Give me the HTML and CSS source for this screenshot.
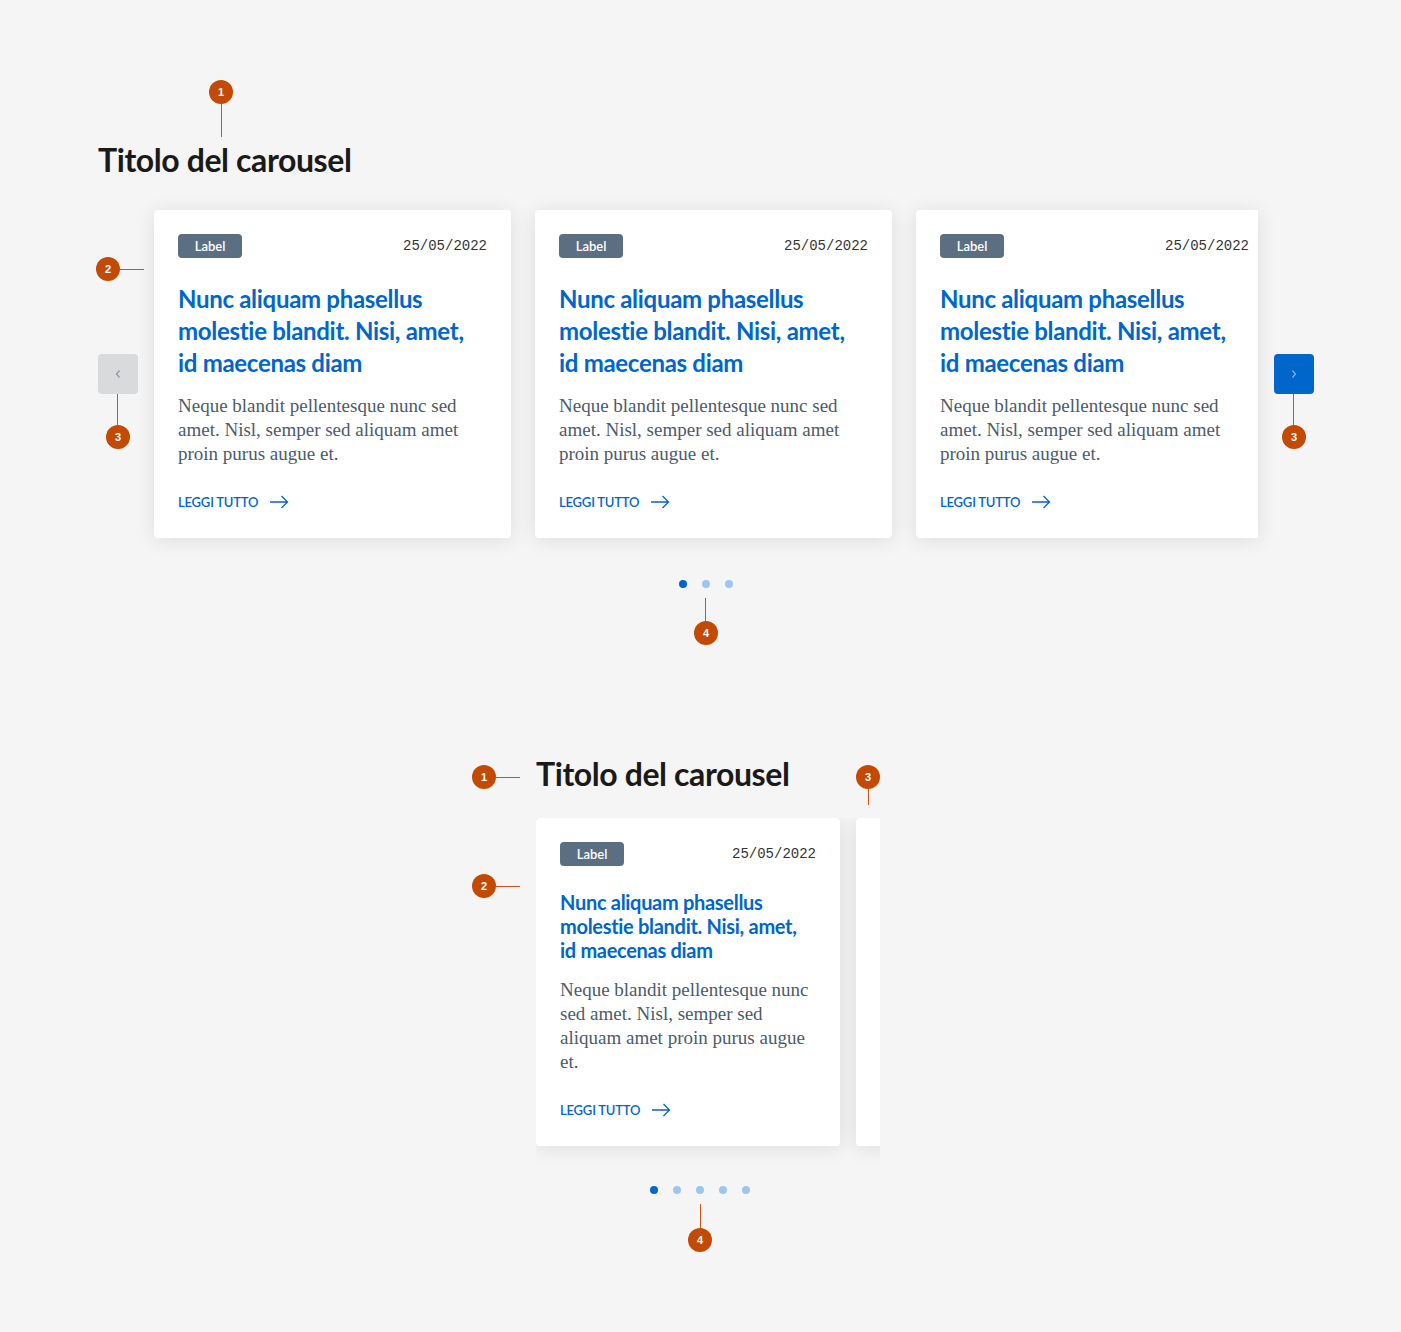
FILE: index.html
```html
<!DOCTYPE html>
<html lang="it">
<head>
<meta charset="utf-8">
<title>Carousel</title>
<link rel="stylesheet" href="styles.css">
</head>
<body>
<main class="page">

  <section class="desk">
    <h2 class="title">Titolo del carousel</h2>
    <div class="row">
      <button class="nav nav-prev" aria-label="Precedente">
        <svg width="8" height="10" viewBox="0 0 8 10"><polyline points="5.5,1.5 2.5,5 5.5,8.5" fill="none" stroke="#8e969e" stroke-width="1.2"/></svg>
      </button>
      <div class="track">
        <article class="card">
          <div class="card-inner">
            <div class="card-head"><span class="label">Label</span><span class="date">25/05/2022</span></div>
            <h3 class="card-title">Nunc aliquam phasellus molestie blandit. Nisi, amet, id maecenas diam</h3>
            <p class="card-text">Neque blandit pellentesque nunc sed amet. Nisl, semper sed aliquam amet proin purus augue et.</p>
            <a class="more" href="#">LEGGI TUTTO <svg width="20" height="14" viewBox="0 0 20 14"><path d="M1 7H18.5M12.5 1L18.5 7L12.5 13" fill="none" stroke="#0066cc" stroke-width="1.3"/></svg></a>
          </div>
        </article>
        <article class="card">
          <div class="card-inner">
            <div class="card-head"><span class="label">Label</span><span class="date">25/05/2022</span></div>
            <h3 class="card-title">Nunc aliquam phasellus molestie blandit. Nisi, amet, id maecenas diam</h3>
            <p class="card-text">Neque blandit pellentesque nunc sed amet. Nisl, semper sed aliquam amet proin purus augue et.</p>
            <a class="more" href="#">LEGGI TUTTO <svg width="20" height="14" viewBox="0 0 20 14"><path d="M1 7H18.5M12.5 1L18.5 7L12.5 13" fill="none" stroke="#0066cc" stroke-width="1.3"/></svg></a>
          </div>
        </article>
        <article class="card card-cut">
          <div class="card-inner">
            <div class="card-head"><span class="label">Label</span><span class="date">25/05/2022</span></div>
            <h3 class="card-title">Nunc aliquam phasellus molestie blandit. Nisi, amet, id maecenas diam</h3>
            <p class="card-text">Neque blandit pellentesque nunc sed amet. Nisl, semper sed aliquam amet proin purus augue et.</p>
            <a class="more" href="#">LEGGI TUTTO <svg width="20" height="14" viewBox="0 0 20 14"><path d="M1 7H18.5M12.5 1L18.5 7L12.5 13" fill="none" stroke="#0066cc" stroke-width="1.3"/></svg></a>
          </div>
        </article>
      </div>
      <button class="nav nav-next" aria-label="Successivo">
        <svg width="8" height="10" viewBox="0 0 8 10"><polyline points="2.5,1.5 5.5,5 2.5,8.5" fill="none" stroke="#7fb6f0" stroke-width="1.2"/></svg>
      </button>
    </div>
    <div class="dots dots-desk"><span class="dot active"></span><span class="dot"></span><span class="dot"></span></div>

    <span class="ann ann-v a-d1"><span class="pin">1</span></span>
    <span class="ann ann-h a-d2"><span class="pin">2</span></span>
    <span class="ann ann-v a-d3l"><span class="pin">3</span></span>
    <span class="ann ann-v a-d3r"><span class="pin">3</span></span>
    <span class="ann ann-v a-d4"><span class="pin">4</span></span>
  </section>

  <section class="mob">
    <h2 class="title">Titolo del carousel</h2>
    <div class="mtrack">
      <article class="card mcard">
        <div class="card-inner">
          <div class="card-head"><span class="label">Label</span><span class="date">25/05/2022</span></div>
          <h3 class="card-title">Nunc aliquam phasellus molestie blandit. Nisi, amet, id maecenas diam</h3>
          <p class="card-text">Neque blandit pellentesque nunc sed amet. Nisl, semper sed aliquam amet proin purus augue et.</p>
          <a class="more" href="#">LEGGI TUTTO <svg width="20" height="14" viewBox="0 0 20 14"><path d="M1 7H18.5M12.5 1L18.5 7L12.5 13" fill="none" stroke="#0066cc" stroke-width="1.3"/></svg></a>
        </div>
      </article>
      <article class="card mcard-peek"></article>
    </div>
    <div class="dots dots-mob"><span class="dot active"></span><span class="dot"></span><span class="dot"></span><span class="dot"></span><span class="dot"></span></div>

    <span class="ann ann-h a-m1"><span class="pin">1</span></span>
    <span class="ann ann-h a-m2"><span class="pin">2</span></span>
    <span class="ann ann-v a-m3"><span class="pin">3</span></span>
    <span class="ann ann-v a-m4"><span class="pin">4</span></span>
  </section>

</main>
</body>
</html>
```

FILE: styles.css
```css
* { box-sizing: border-box; }
html, body { margin: 0; padding: 0; }
body {
  background: #f5f5f5;
  font-family: Lato, "Noto Sans", sans-serif;
  color: #1a1a1a;
  min-height: 1332px;
}
.page { width: 1401px; }

.title {
  margin: 0;
  font-family: Lato, "Noto Sans", sans-serif;
  font-weight: 700;
  font-size: 32px;
  line-height: 40px;
  color: #1a1a1a;
  letter-spacing: -0.4px;
}

/* ---------- desktop ---------- */
.desk {
  position: relative;
  padding: 140px 0 0 98px;
}
.desk .title { margin-bottom: 30px; }
.row {
  display: flex;
  align-items: center;
  gap: 16px;
}
.nav {
  width: 40px;
  height: 40px;
  border: 0;
  border-radius: 4px;
  padding: 0;
  display: flex;
  align-items: center;
  justify-content: center;
}
.nav-prev { background: #d9dadb; }
.nav-next { background: #0066cc; }
.track {
  display: flex;
  gap: 24px;
  width: 1104px;
}

.card {
  background: #fff;
  border-radius: 4px;
  box-shadow: 0 2px 20px rgba(0, 0, 0, 0.1);
  overflow: hidden;
  flex: none;
  width: 357px;
}
.card-cut { width: 342px; border-radius: 4px 0 0 4px; }
.card-inner {
  width: 357px;
  padding: 24px;
}
.card-head {
  display: flex;
  justify-content: space-between;
  align-items: center;
  height: 24px;
}
.label {
  display: inline-block;
  height: 24px;
  line-height: 24px;
  width: 64px;
  border-radius: 4px;
  background: #5c6f82;
  color: #fff;
  font-size: 13px;
  font-weight: 600;
  text-align: center;
}
.date {
  font-family: "Liberation Mono", "DejaVu Sans Mono", monospace;
  font-size: 14px;
  line-height: 26px;
  color: #333;
}
.card-title {
  margin: 25px 0 0;
  font-weight: 700;
  font-size: 24px;
  line-height: 32px;
  color: #0066cc;
  letter-spacing: -0.3px;
}
.card-text {
  margin: 15px 0 0;
  font-family: "Liberation Serif", "DejaVu Serif", serif;
  font-size: 19px;
  line-height: 24px;
  color: #4b5b6b;
}
.more {
  margin-top: 24px;
  display: flex;
  align-items: center;
  gap: 11px;
  height: 24px;
  font-size: 13px;
  font-weight: 600;
  letter-spacing: -0.2px;
  color: #0066cc;
  text-decoration: none;
}

.dots {
  display: flex;
  justify-content: center;
  gap: 15px;
}
.dot {
  width: 8px;
  height: 8px;
  border-radius: 50%;
  background: #9cc6f0;
}
.dot.active { background: #0066cc; }
.dots-desk {
  width: 1104px;
  margin: 42px 0 0 56px;
}

/* ---------- mobile ---------- */
.mob {
  position: relative;
  padding: 166px 0 0 536px;
}
.mob .title { margin-bottom: 24px; }
.mtrack {
  display: flex;
  gap: 16px;
  width: 344px;
  overflow: hidden;
  padding-bottom: 30px;
  margin-bottom: -30px;
}
.mcard { width: 304px; }
.mcard .card-inner { width: 304px; }
.mcard .card-title {
  margin-top: 24px;
  font-size: 20px;
  line-height: 24px;
}
.mcard .card-text { margin-top: 16px; }
.mcard-peek { width: 304px; height: 328px; }
.dots-mob {
  width: 328px;
  margin-top: 40px;
}

/* ---------- annotations ---------- */
.ann {
  position: absolute;
  display: block;
  background: #d0560f;
}
.pin {
  position: absolute;
  width: 24px;
  height: 24px;
  border-radius: 50%;
  background: #c24a04;
  color: #fff;
  font-family: "Liberation Sans", Arial, sans-serif;
  font-weight: 700;
  font-size: 11px;
  line-height: 24px;
  text-align: center;
}
.ann-v { width: 1px; }
.ann-h { height: 1px; }

.a-d1 { left: 221px; top: 104px; height: 33px; }
.a-d1 .pin { left: -12px; top: -24px; }
.a-d2 { left: 120px; top: 269px; width: 24px; }
.a-d2 .pin { left: -24px; top: -12px; }
.a-d3l { left: 117px; top: 394px; height: 31px; }
.a-d3l .pin { left: -11px; top: 31px; }
.a-d3r { left: 1293px; top: 394px; height: 31px; }
.a-d3r .pin { left: -11px; top: 31px; }
.a-d4 { left: 705px; top: 598px; height: 23px; }
.a-d4 .pin { left: -11px; top: 23px; }

.a-m1 { left: 496px; top: 189px; width: 24px; }
.a-m1 .pin { left: -24px; top: -12px; }
.a-m2 { left: 496px; top: 298px; width: 24px; }
.a-m2 .pin { left: -24px; top: -12px; }
.a-m3 { left: 868px; top: 201px; height: 16px; }
.a-m3 .pin { left: -12px; top: -24px; }
.a-m4 { left: 700px; top: 616px; height: 24px; }
.a-m4 .pin { left: -12px; top: 24px; }
```
